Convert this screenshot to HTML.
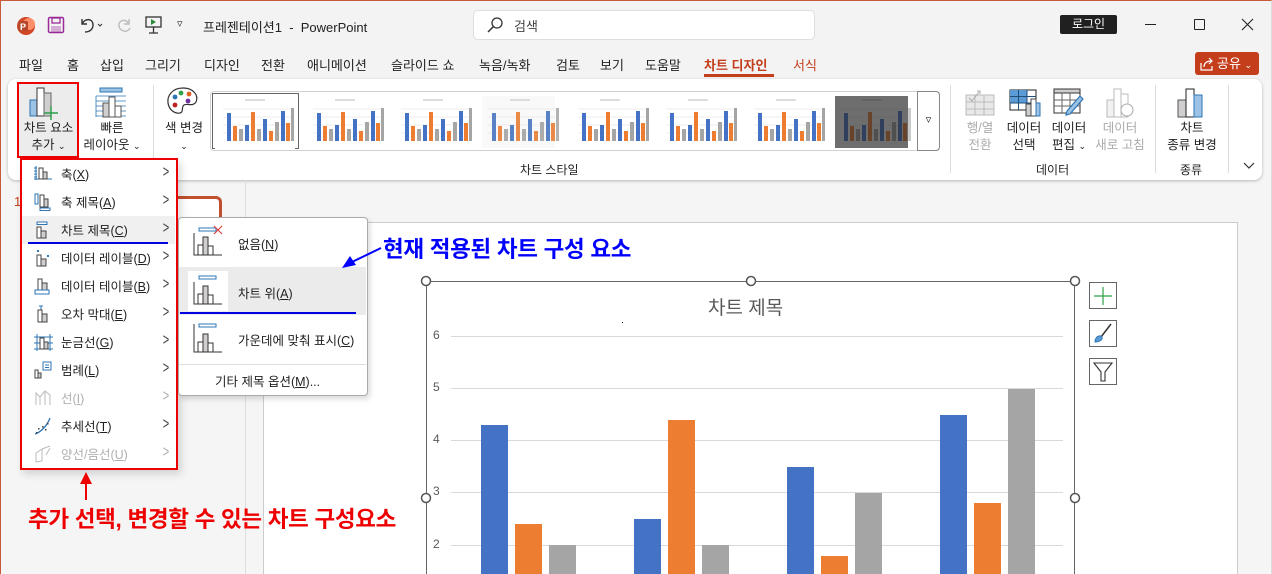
<!DOCTYPE html>
<html style="overflow:hidden"><head><meta charset="utf-8">
<style>
*{margin:0;padding:0;box-sizing:border-box}
html,body{width:1272px;height:574px;overflow:hidden}
body{background:#f5f5f5;font-family:"Liberation Sans","Noto Sans CJK KR",sans-serif;color:#222;position:relative}
.a{position:absolute;white-space:nowrap}
.t{font-size:13px}
.menu .it{position:absolute;left:0;width:153px;height:28px}
.menu .it span{position:absolute;left:39px;top:4px;font-size:12.5px}
.menu .it i{position:absolute;left:139px;top:2px;font-style:normal;font-size:17px;color:#444;transform:scaleX(.65)}
.menu svg{position:absolute;left:12px;top:5px}
.g{color:#b0b0b0!important}
</style></head><body>
<div class="a" style="left:0;top:0;width:1272px;height:574px;border:1px solid #c85a3a;border-bottom:none;border-right-color:#ddd;pointer-events:none;z-index:50"></div>
<div class="a" style="left:0;top:0;width:1272px;height:80px;background:#f3f3f3"></div>
<!-- title bar -->
<svg class="a" style="left:16px;top:16px" width="20" height="20"><circle cx="10" cy="10" r="9" fill="#d24726"/><circle cx="13" cy="8" r="6" fill="#ff8f6b"/><rect x="2" y="5" width="10" height="10" rx="1.5" fill="#b7472a"/><text x="4" y="14" font-size="9" fill="#fff" font-family="Liberation Sans" font-weight="bold">P</text></svg>
<svg class="a" style="left:47px;top:16px" width="18" height="18"><rect x="1.5" y="1.5" width="15" height="15" rx="1.5" fill="none" stroke="#9a2a9a" stroke-width="1.5"/><rect x="5" y="2" width="8" height="5" fill="none" stroke="#9a2a9a" stroke-width="1.3"/><rect x="4" y="10" width="10" height="6" fill="#9a2a9a" opacity=".35"/></svg>
<svg class="a" style="left:77px;top:15px" width="26" height="20"><path d="M5 4 v5 h5 M5 9 C8 3,16 3,16 10 C16 14,13 17,8 17" fill="none" stroke="#333" stroke-width="1.4"/><path d="M21 9 l2 2 l2-2" fill="none" stroke="#333"/></svg>
<svg class="a" style="left:115px;top:15px" width="20" height="20"><path d="M14 4 v5 h-5 M14 9 C11 3,3 5,4 11 C5 17,13 18,15 13" fill="none" stroke="#bbb" stroke-width="1.4"/></svg>
<svg class="a" style="left:144px;top:15px" width="20" height="20"><rect x="2" y="2" width="15" height="10" fill="none" stroke="#333" stroke-width="1.3"/><path d="M7 4 l5 3 l-5 3z" fill="#2a8a3a"/><path d="M9.5 12 v6 M5 18 h9" stroke="#333" stroke-width="1.3"/></svg>
<div class="a" style="left:177px;top:17px;font-size:11px;color:#333">▿</div>
<div class="a t" style="left:203px;top:17px;font-size:13px">프레젠테이션1 &nbsp;-&nbsp; PowerPoint</div>
<div class="a" style="left:473px;top:10px;width:342px;height:30px;background:#fff;border:1px solid #ddd;border-radius:5px"></div>
<svg class="a" style="left:486px;top:16px" width="18" height="18"><circle cx="11" cy="7" r="5" fill="none" stroke="#333" stroke-width="1.3"/><path d="M7.5 10.5 L2 16" stroke="#333" stroke-width="1.5"/></svg>
<div class="a t" style="left:514px;top:16px;color:#444">검색</div>
<div class="a" style="left:1060px;top:15px;width:57px;height:19px;background:#202020;border-radius:2px;color:#fff;font-size:12px;text-align:center;line-height:19px">로그인</div>
<div class="a" style="left:1145px;top:24px;width:11px;height:1px;background:#222"></div>
<div class="a" style="left:1194px;top:19px;width:11px;height:11px;border:1px solid #222;border-radius:1px"></div>
<svg class="a" style="left:1241px;top:18px" width="13" height="13"><path d="M1 1 L12 12 M12 1 L1 12" stroke="#222" stroke-width="1.1"/></svg>
<!-- tabs -->
<div class="a t" style="left:19px;top:55px">파일</div>
<div class="a t" style="left:67px;top:55px">홈</div>
<div class="a t" style="left:100px;top:55px">삽입</div>
<div class="a t" style="left:145px;top:55px">그리기</div>
<div class="a t" style="left:204px;top:55px">디자인</div>
<div class="a t" style="left:261px;top:55px">전환</div>
<div class="a t" style="left:307px;top:55px">애니메이션</div>
<div class="a t" style="left:391px;top:55px">슬라이드 쇼</div>
<div class="a t" style="left:479px;top:55px">녹음/녹화</div>
<div class="a t" style="left:556px;top:55px">검토</div>
<div class="a t" style="left:600px;top:55px">보기</div>
<div class="a t" style="left:645px;top:55px">도움말</div>
<div class="a t" style="left:704px;top:55px;color:#c43e1c;font-weight:bold">차트 디자인</div>
<div class="a" style="left:704px;top:74px;width:70px;height:3px;background:#c43e1c"></div>
<div class="a t" style="left:793px;top:55px;color:#c43e1c">서식</div>
<div class="a" style="left:1195px;top:52px;width:64px;height:23px;background:#c43e1c;border-radius:3px;color:#fff;font-size:13px;line-height:23px;padding-left:22px">공유 <span style="font-size:9px">⌄</span></div>
<svg class="a" style="left:1200px;top:57px" width="14" height="14"><path d="M1 6 v7 h11 v-4" fill="none" stroke="#fff" stroke-width="1.2"/><path d="M4 10 C4 5,8 4,12 4 M9 1 l3 3 l-3 3" fill="none" stroke="#fff" stroke-width="1.2"/></svg>
<!-- ribbon -->
<div class="a" style="left:8px;top:79px;width:1254px;height:101px;background:#fff;border-radius:8px;box-shadow:0 1px 3px rgba(0,0,0,.25)"></div>
<div class="a" style="left:17px;top:82px;width:62px;height:76px;background:#ececec;border:2px solid #e00"></div>
<svg class="a" style="left:27px;top:86px" width="40" height="36"><rect x="3" y="14" width="8" height="16" fill="#9cc3e5" stroke="#2e75b6"/><rect x="10" y="2" width="7" height="28" fill="#fff" stroke="#333"/><rect x="17" y="7" width="7" height="23" fill="#d0cece" stroke="#666"/><path d="M24 20 v14 M17 27 h14" stroke="#2e9e4a" stroke-width="1.5"/></svg>
<div class="a" style="left:23px;top:120px;font-size:12.5px;text-align:center;width:51px;line-height:17px">차트 요소<br>추가 <span style="font-size:9px">⌄</span></div>
<svg class="a" style="left:94px;top:86px" width="34" height="34"><rect x="6" y="2" width="22" height="4" fill="#9cc3e5" stroke="#2e75b6"/><path d="M2 10 h30 M2 15 h30 M2 20 h30 M2 25 h30 M2 30 h30 M2 10 v21" stroke="#2e75b6" stroke-width=".8"/><rect x="9" y="17" width="6" height="14" fill="#d0cece" stroke="#555"/><rect x="15" y="11" width="6" height="20" fill="#fff" stroke="#555"/><rect x="21" y="20" width="6" height="11" fill="#fff" stroke="#555"/></svg>
<div class="a" style="left:82px;top:120px;font-size:12.5px;text-align:center;width:60px;line-height:17px">빠른<br>레이아웃 <span style="font-size:9px">⌄</span></div>
<div class="a" style="left:153px;top:85px;width:1px;height:88px;background:#ddd"></div>
<svg class="a" style="left:166px;top:86px" width="34" height="30"><path d="M17 2 C6 2,1 10,2 17 C3 24,9 28,14 27 C18 26,15 21,18 19 C21 17,27 21,30 16 C33 9,27 2,17 2Z" fill="#fff" stroke="#333" stroke-width="1.2"/><circle cx="9" cy="11" r="2.4" fill="#2e75b6"/><circle cx="15" cy="7" r="2.4" fill="#2ea04a"/><circle cx="23" cy="8" r="2.4" fill="#e06020"/><circle cx="9" cy="19" r="2.4" fill="#c02020"/><circle cx="22" cy="15" r="2.4" fill="#7030a0"/></svg>
<div class="a" style="left:162px;top:120px;font-size:12.5px;text-align:center;width:44px;line-height:17px">색 변경<br><span style="font-size:9px">⌄</span></div>
<div class="a" style="left:210px;top:91px;width:730px;height:60px;border:1px solid #d0d0d0;border-radius:4px"></div>
<div class="a" style="left:917px;top:91px;width:23px;height:60px;border:1px solid #888;border-radius:0 4px 4px 0;font-size:11px;text-align:center;line-height:56px">▿</div>
<div class="a" style="left:212px;top:93px;width:87px;height:56px;border:1px solid #666"></div>
<div class="a" style="left:520px;top:161px;font-size:12px">차트 스타일</div>
<div class="a" style="left:950px;top:85px;width:1px;height:88px;background:#ddd"></div>
<svg class="a" style="left:965px;top:88px" width="30" height="28"><rect x="1" y="7" width="28" height="20" fill="#e8e8e8" stroke="#bbb"/><path d="M10 7 v20 M19 7 v20 M1 14 h28 M1 21 h28" stroke="#bbb"/><path d="M4 10 l3 3 l7-9 M12 3 l3 0 0 3" fill="none" stroke="#aaa"/></svg>
<div class="a" style="left:962px;top:120px;font-size:12.5px;text-align:center;width:36px;line-height:17px;color:#aaa">행/열<br>전환</div>
<svg class="a" style="left:1009px;top:88px" width="32" height="30"><rect x="1" y="2" width="26" height="20" fill="#fff" stroke="#222"/><rect x="1" y="2" width="17" height="13" fill="#5b9bd5"/><path d="M9.5 2 v20 M18 2 v20 M1 8.5 h26 M1 15 h26" stroke="#1f4e79"/><rect x="17" y="16" width="5" height="12" fill="#d0cece" stroke="#444"/><rect x="22" y="11" width="5" height="17" fill="#fff" stroke="#444"/><rect x="27" y="15" width="4" height="13" fill="#9cc3e5" stroke="#2e75b6"/></svg>
<div class="a" style="left:1006px;top:120px;font-size:12.5px;text-align:center;width:36px;line-height:17px">데이터<br>선택</div>
<svg class="a" style="left:1053px;top:88px" width="32" height="30"><rect x="1" y="1" width="26" height="24" fill="#fff" stroke="#333"/><rect x="1" y="1" width="26" height="4" fill="#d0cece" stroke="#333"/><path d="M9 5 v20 M17 5 v20 M1 12 h26 M1 18 h26" stroke="#666"/><path d="M27 8 l3 3 l-13 15 l-4 1 l1-4z" fill="#9cc3e5" stroke="#2e75b6" stroke-width="1.2"/></svg>
<div class="a" style="left:1048px;top:120px;font-size:12.5px;text-align:center;width:42px;line-height:17px">데이터<br>편집 <span style="font-size:9px">⌄</span></div>
<svg class="a" style="left:1104px;top:88px" width="32" height="30"><rect x="3" y="12" width="7" height="17" fill="#f2f2f2" stroke="#bbb"/><rect x="10" y="1" width="7" height="28" fill="#fff" stroke="#bbb"/><rect x="17" y="6" width="7" height="23" fill="#fff" stroke="#bbb"/><circle cx="23" cy="22" r="6" fill="#fff" stroke="#aaa"/></svg>
<div class="a" style="left:1092px;top:120px;font-size:12.5px;text-align:center;width:56px;line-height:17px;color:#aaa">데이터<br>새로 고침</div>
<div class="a" style="left:1155px;top:85px;width:1px;height:88px;background:#ddd"></div>
<svg class="a" style="left:1177px;top:88px" width="28" height="30"><rect x="1" y="12" width="8" height="17" fill="#d0cece" stroke="#555"/><rect x="9" y="1" width="8" height="28" fill="#fff" stroke="#222"/><rect x="17" y="7" width="8" height="22" fill="#9cc3e5" stroke="#2e75b6"/></svg>
<div class="a" style="left:1162px;top:120px;font-size:12.5px;text-align:center;width:60px;line-height:17px">차트<br>종류 변경</div>
<div class="a" style="left:1036px;top:161px;font-size:12px">데이터</div>
<div class="a" style="left:1180px;top:161px;font-size:12px">종류</div>
<div class="a" style="left:1228px;top:85px;width:1px;height:88px;background:#ddd"></div>
<svg class="a" style="left:1243px;top:162px" width="12" height="8"><path d="M1 1 l5 5 l5-5" fill="none" stroke="#333" stroke-width="1.2"/></svg>
<!-- lower area -->
<div class="a" style="left:245px;top:180px;width:1px;height:394px;background:#ddd"></div>
<div class="a" style="left:14px;top:194px;font-size:13px;color:#c43e1c">1</div>
<div class="a" style="left:60px;top:196px;width:162px;height:140px;border:3px solid #c0502f;border-radius:6px;background:#fff"></div>
<div class="a" style="left:263px;top:222px;width:975px;height:360px;background:#fff;border:1px solid #ccc"></div>
<!-- chart -->
<div class="a" style="left:426px;top:281px;width:649px;height:300px;border:1px solid #666"></div>
<div class="a" style="left:708px;top:293px;font-size:19px;color:#595959">차트 제목</div>
<div class="a" style="left:622px;top:322px;width:1px;height:1px;background:#000"></div>
<div class="a" style="left:451px;top:336px;width:612px;height:1px;background:#d9d9d9"></div>
<div class="a" style="left:451px;top:388px;width:612px;height:1px;background:#d9d9d9"></div>
<div class="a" style="left:451px;top:440px;width:612px;height:1px;background:#d9d9d9"></div>
<div class="a" style="left:451px;top:492px;width:612px;height:1px;background:#d9d9d9"></div>
<div class="a" style="left:451px;top:545px;width:612px;height:1px;background:#d9d9d9"></div>
<div class="a" style="left:433px;top:328px;font-size:12px;color:#595959">6</div>
<div class="a" style="left:433px;top:380px;font-size:12px;color:#595959">5</div>
<div class="a" style="left:433px;top:432px;font-size:12px;color:#595959">4</div>
<div class="a" style="left:433px;top:484px;font-size:12px;color:#595959">3</div>
<div class="a" style="left:433px;top:537px;font-size:12px;color:#595959">2</div>
<div class="a" style="left:481px;top:425px;width:27px;height:160px;background:#4472c4"></div>
<div class="a" style="left:515px;top:524px;width:27px;height:60px;background:#ed7d31"></div>
<div class="a" style="left:549px;top:545px;width:27px;height:40px;background:#a5a5a5"></div>
<div class="a" style="left:634px;top:519px;width:27px;height:70px;background:#4472c4"></div>
<div class="a" style="left:668px;top:420px;width:27px;height:170px;background:#ed7d31"></div>
<div class="a" style="left:702px;top:545px;width:27px;height:40px;background:#a5a5a5"></div>
<div class="a" style="left:787px;top:467px;width:27px;height:120px;background:#4472c4"></div>
<div class="a" style="left:821px;top:556px;width:27px;height:30px;background:#ed7d31"></div>
<div class="a" style="left:855px;top:493px;width:27px;height:100px;background:#a5a5a5"></div>
<div class="a" style="left:940px;top:415px;width:27px;height:170px;background:#4472c4"></div>
<div class="a" style="left:974px;top:503px;width:27px;height:90px;background:#ed7d31"></div>
<div class="a" style="left:1008px;top:389px;width:27px;height:200px;background:#a5a5a5"></div>
<svg class="a" style="left:0;top:0;overflow:visible" width="1272" height="574">
<g fill="#fff" stroke="#555" stroke-width="1.5"><circle cx="426" cy="281" r="4.5"/><circle cx="751" cy="281" r="4.5"/><circle cx="1075" cy="281" r="4.5"/><circle cx="426" cy="498" r="4.5"/><circle cx="1075" cy="498" r="4.5"/></g>
</svg>
<div class="a" style="left:1089px;top:282px;width:28px;height:27px;border:1px solid #666;background:#fff"></div>
<svg class="a" style="left:1092px;top:285px" width="22" height="22"><path d="M11 2 v18 M2 11 h18" stroke="#2ea04a" stroke-width="1.2"/></svg>
<div class="a" style="left:1089px;top:320px;width:28px;height:27px;border:1px solid #666;background:#fff"></div>
<svg class="a" style="left:1092px;top:322px" width="22" height="22"><path d="M19 2 L9 15" stroke="#333" stroke-width="1.5"/><path d="M9 14 C5 13,3 17,3 20 C7 20,11 18,10 15z" fill="#5b9bd5" stroke="#2e75b6"/></svg>
<div class="a" style="left:1089px;top:358px;width:28px;height:27px;border:1px solid #666;background:#fff"></div>
<svg class="a" style="left:1092px;top:361px" width="22" height="22"><path d="M2 2 h18 l-7 9 v9 h-4 v-9z" fill="none" stroke="#333" stroke-width="1.1"/></svg>
<!-- menu -->
<div class="a menu" style="left:20px;top:158px;width:158px;height:312px;background:#fff;border:2px solid #e00;box-shadow:3px 4px 8px rgba(0,0,0,.15)">
<div class="it" style="top:0px"><svg width="18" height="16"><path d="M2 1 v14 M0 14 h18 M0 3 h3 M0 6 h3 M0 9 h3 M0 12 h3" stroke="#2e75b6"/><rect x="5" y="3" width="4" height="11" fill="#fff" stroke="#444"/><rect x="9" y="7" width="4" height="7" fill="#d0cece" stroke="#444"/></svg><span>축(<u>X</u>)</span><i>&gt;</i></div>
<div class="it" style="top:28px"><svg width="18" height="18"><rect x="1" y="1" width="3" height="10" fill="#fff" stroke="#2e75b6"/><rect x="6" y="2" width="4" height="12" fill="#fff" stroke="#444"/><rect x="10" y="6" width="4" height="8" fill="#d0cece" stroke="#444"/><rect x="6" y="15" width="10" height="2.5" fill="#fff" stroke="#2e75b6"/></svg><span>축 제목(<u>A</u>)</span><i>&gt;</i></div>
<div class="it" style="top:56px;background:#f0f0f0"><svg width="18" height="18"><rect x="3" y="1" width="10" height="2.5" fill="#fff" stroke="#2e75b6"/><rect x="3" y="6" width="4" height="11" fill="#fff" stroke="#444"/><rect x="7" y="10" width="5" height="7" fill="#d0cece" stroke="#444"/></svg><span>차트 제목(<u>C</u>)</span><i>&gt;</i></div>
<div class="a" style="left:6px;top:82px;width:140px;height:2px;background:#0000e0"></div>
<div class="it" style="top:84px"><svg width="18" height="18"><rect x="3" y="1" width="2" height="2" fill="#2e75b6"/><rect x="3" y="6" width="4" height="11" fill="#fff" stroke="#444"/><rect x="7" y="10" width="5" height="7" fill="#d0cece" stroke="#444"/><rect x="13" y="6" width="2" height="2" fill="#2e75b6"/></svg><span>데이터 레이블(<u>D</u>)</span><i>&gt;</i></div>
<div class="it" style="top:112px"><svg width="18" height="18"><rect x="4" y="2" width="4" height="11" fill="#fff" stroke="#444"/><rect x="8" y="6" width="5" height="7" fill="#d0cece" stroke="#444"/><rect x="1" y="13" width="14" height="4" fill="#fff" stroke="#2e75b6"/></svg><span>데이터 테이블(<u>B</u>)</span><i>&gt;</i></div>
<div class="it" style="top:140px"><svg width="18" height="18"><path d="M5 1 h4 M7 1 v5" stroke="#2e75b6"/><rect x="4" y="5" width="4" height="12" fill="#fff" stroke="#444"/><rect x="8" y="9" width="5" height="8" fill="#d0cece" stroke="#444"/></svg><span>오차 막대(<u>E</u>)</span><i>&gt;</i></div>
<div class="it" style="top:168px"><svg width="20" height="18"><path d="M0 4 h19 M0 10 h19 M0 16 h19 M3 1 v17 M16 1 v17" stroke="#2e75b6"/><rect x="6" y="5" width="4" height="11" fill="#fff" stroke="#444"/><rect x="10" y="9" width="4" height="7" fill="#d0cece" stroke="#444"/></svg><span>눈금선(<u>G</u>)</span><i>&gt;</i></div>
<div class="it" style="top:196px"><svg width="18" height="18"><rect x="1" y="9" width="3" height="8" fill="#fff" stroke="#444"/><rect x="4" y="12" width="3" height="5" fill="#d0cece" stroke="#444"/><rect x="9" y="1" width="8" height="8" fill="#fff" stroke="#2e75b6"/><path d="M11 4 h4 M11 6.5 h4" stroke="#2e75b6"/></svg><span>범례(<u>L</u>)</span><i>&gt;</i></div>
<div class="it" style="top:224px"><svg width="18" height="18"><path d="M2 16 V4 L6 8 L11 2 L16 6 V16 M6 8 v8 M11 2 v14" fill="none" stroke="#bbb"/></svg><span class="g">선(<u>I</u>)</span><i class="g">&gt;</i></div>
<div class="it" style="top:252px"><svg width="18" height="18"><path d="M1 17 C7 15,13 9,16 1" fill="none" stroke="#2e75b6" stroke-width="1.3"/><g fill="#444"><rect x="4" y="11" width="1.5" height="1.5"/><rect x="8" y="9" width="1.5" height="1.5"/><rect x="11" y="12" width="1.5" height="1.5"/><rect x="13" y="6" width="1.5" height="1.5"/><rect x="2" y="15" width="1.5" height="1.5"/></g></svg><span>추세선(<u>T</u>)</span><i>&gt;</i></div>
<div class="it" style="top:280px"><svg width="18" height="18"><path d="M2 8 L8 4 V16 L2 17Z M8 4 L16 1 M12 10 L16 3" fill="none" stroke="#bbb"/></svg><span class="g">양선/음선(<u>U</u>)</span><i class="g">&gt;</i></div>
</div>
<!-- submenu -->
<div class="a" style="left:178px;top:217px;width:190px;height:179px;background:#fff;border:1px solid #aaa;border-radius:4px;box-shadow:2px 3px 6px rgba(0,0,0,.15)"></div>
<div class="a" style="left:179px;top:267px;width:187px;height:48px;background:#ebebeb"></div>
<div class="a" style="left:188px;top:271px;width:40px;height:40px;background:#fff"></div>
<svg class="a" style="left:193px;top:225px" width="32" height="32"><rect x="6" y="3" width="17" height="3" fill="#fff" stroke="#2e75b6"/><path d="M21 1 l8 8 M29 1 l-8 8" stroke="#e03030"/><path d="M1 8 V30 H29" fill="none" stroke="#333"/><rect x="5" y="20" width="5" height="10" fill="#fff" stroke="#333"/><rect x="10" y="12" width="5" height="18" fill="#d0cece" stroke="#333"/><rect x="15" y="21" width="5" height="9" fill="#fff" stroke="#333"/></svg>
<div class="a" style="left:238px;top:234px;font-size:12.5px">없음(<u>N</u>)</div>
<svg class="a" style="left:193px;top:274px" width="32" height="32"><rect x="6" y="2" width="17" height="3" fill="#fff" stroke="#2e75b6"/><path d="M1 8 V30 H29" fill="none" stroke="#333"/><rect x="5" y="20" width="5" height="10" fill="#fff" stroke="#333"/><rect x="10" y="12" width="5" height="18" fill="#d0cece" stroke="#333"/><rect x="15" y="21" width="5" height="9" fill="#fff" stroke="#333"/></svg>
<div class="a" style="left:238px;top:283px;font-size:12.5px">차트 위(<u>A</u>)</div>
<div class="a" style="left:180px;top:312px;width:176px;height:2px;background:#0000e0"></div>
<svg class="a" style="left:193px;top:322px" width="32" height="32"><rect x="6" y="2" width="17" height="3" fill="#fff" stroke="#2e75b6"/><path d="M1 2 V30 H29" fill="none" stroke="#333"/><rect x="5" y="20" width="5" height="10" fill="#fff" stroke="#333"/><rect x="10" y="12" width="5" height="18" fill="#d0cece" stroke="#333"/><rect x="15" y="21" width="5" height="9" fill="#fff" stroke="#333"/></svg>
<div class="a" style="left:238px;top:330px;font-size:12.5px">가운데에 맞춰 표시(<u>C</u>)</div>
<div class="a" style="left:179px;top:364px;width:187px;height:1px;background:#ddd"></div>
<div class="a" style="left:215px;top:371px;font-size:12.5px">기타 제목 옵션(<u>M</u>)...</div>
<!-- annotations -->
<div class="a" style="left:383px;top:232px;font-size:22.5px;font-weight:bold;color:#0000ff;letter-spacing:-.3px">현재 적용된 차트 구성 요소</div>
<svg class="a" style="left:0;top:0;overflow:visible" width="1272" height="574">
<path d="M381 248 L352 262" stroke="#0000ff" stroke-width="2"/><path d="M342 268 L350 256 L356 265Z" fill="#0000ff"/>
<path d="M86 500 L86 482" stroke="#e00" stroke-width="2"/><path d="M80 484 L86 472 L92 484Z" fill="#e00"/>
</svg>
<div class="a" style="left:28px;top:502px;font-size:22.5px;font-weight:bold;color:#e00;letter-spacing:-.3px">추가 선택, 변경할 수 있는 차트 구성요소</div>
<!-- gallery thumbnails -->
<svg class="a" style="left:0;top:0" width="1272" height="574">
<defs><g id="tb"><rect x="0" y="0" width="80" height="54" fill="#fff"/><path d="M8 14 h68 M8 22 h68 M8 30 h68 M8 38 h68" stroke="#eee"/><g><rect x="12" y="18" width="4" height="28" fill="#4472c4"/><rect x="18" y="31" width="4" height="15" fill="#ed7d31"/><rect x="24" y="34" width="4" height="12" fill="#a5a5a5"/><rect x="30" y="30" width="4" height="16" fill="#4472c4"/><rect x="36" y="17" width="4" height="29" fill="#ed7d31"/><rect x="42" y="34" width="4" height="12" fill="#a5a5a5"/><rect x="48" y="24" width="4" height="22" fill="#4472c4"/><rect x="54" y="36" width="4" height="10" fill="#ed7d31"/><rect x="60" y="27" width="4" height="19" fill="#a5a5a5"/><rect x="66" y="16" width="4" height="30" fill="#4472c4"/><rect x="71" y="28" width="4" height="18" fill="#ed7d31"/><rect x="76" y="13" width="3" height="33" fill="#a5a5a5"/></g><path d="M30 5 h20" stroke="#bbb"/></g></defs>
<use href="#tb" x="215" y="95"/><use href="#tb" x="305" y="95"/><use href="#tb" x="393" y="95"/>
<rect x="482" y="96" width="73" height="52" fill="#d8d8d8"/><use href="#tb" x="480" y="95" opacity=".85"/>
<use href="#tb" x="570" y="95"/><use href="#tb" x="658" y="95"/><use href="#tb" x="746" y="95"/>
<rect x="835" y="96" width="73" height="52" fill="#333"/><use href="#tb" x="832" y="95" opacity=".6"/><rect x="835" y="96" width="73" height="52" fill="#222" opacity=".45"/>
</svg>
</body></html>
